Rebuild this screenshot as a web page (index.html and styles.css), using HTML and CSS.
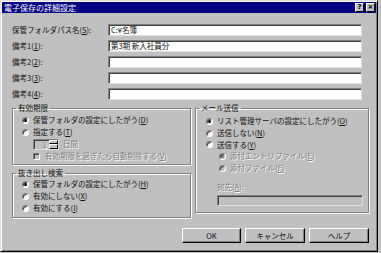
FILE: index.html
```html
<!DOCTYPE html>
<html lang="ja">
<head>
  <meta charset="UTF-8" />
  <title>電子保存の詳細設定</title>
  <link rel="stylesheet" href="styles.css">
</head>
<body>

  <div class="dialog">
    <div class="titlebar">
      <span class="title">電子保存の詳細設定</span>
      <div class="title-buttons">
        <span class="tbtn">?</span>
        <span class="tbtn">×</span>
      </div>
    </div>

    <div class="content">
      <div class="fields">
        <div class="field"><label>保管フォルダパス名(<u>S</u>):</label><div class="textbox">C:¥名簿</div></div>
        <div class="field"><label>備考1(<u>1</u>):</label><div class="textbox">第3期 新入社員分</div></div>
        <div class="field"><label>備考2(<u>2</u>):</label><div class="textbox"></div></div>
        <div class="field"><label>備考3(<u>3</u>):</label><div class="textbox"></div></div>
        <div class="field"><label>備考4(<u>4</u>):</label><div class="textbox"></div></div>
      </div>

      <div class="groups">
        <div class="col-left">
          <fieldset class="group group-expire">
            <legend>有効期限</legend>
            <div class="group-body">
              <div class="opt"><span class="radio checked"></span>保管フォルダの設定にしたがう(<u>D</u>)</div>
              <div class="opt"><span class="radio"></span>指定する(<u>T</u>)</div>
              <div class="opt opt-spin">
                <div class="spinbox">
                  <span class="spin-value">1</span>
                  <span class="spin-btns"><span class="spin-up"></span><span class="spin-down"></span></span>
                </div>
                <span class="disabled">日間</span>
              </div>
              <div class="opt opt-check disabled"><span class="checkbox"></span>有効期限を過ぎたら自動削除する(<u>V</u>)</div>
            </div>
          </fieldset>

          <fieldset class="group group-search">
            <legend>抜き出し検索</legend>
            <div class="group-body">
              <div class="opt"><span class="radio checked"></span>保管フォルダの設定にしたがう(<u>H</u>)</div>
              <div class="opt"><span class="radio"></span>有効にしない(<u>X</u>)</div>
              <div class="opt"><span class="radio"></span>有効にする(<u>I</u>)</div>
            </div>
          </fieldset>
        </div>

        <fieldset class="group group-mail">
          <legend>メール送信</legend>
          <div class="group-body">
            <div class="opt"><span class="radio checked"></span>リスト管理サーバの設定にしたがう(<u>O</u>)</div>
            <div class="opt"><span class="radio"></span>送信しない(<u>N</u>)</div>
            <div class="opt opt-short"><span class="radio"></span>送信する(<u>Y</u>)</div>
            <div class="opt opt-sub disabled"><span class="radio checked"></span>添付エントリファイル(<u>E</u>)</div>
            <div class="opt opt-sub disabled"><span class="radio"></span>添付ファイル(<u>F</u>)</div>
            <div class="opt opt-addr disabled">宛先(<u>A</u>):</div>
            <div class="textbox textbox-disabled addr"></div>
          </div>
        </fieldset>
      </div>

      <div class="buttons">
        <button class="btn btn-ok">OK</button>
        <button class="btn">キャンセル</button>
        <button class="btn">ヘルプ</button>
      </div>
    </div>
  </div>

</body>
</html>
```

FILE: styles.css
```css
* {
  margin: 0;
  padding: 0;
  box-sizing: border-box;
}

body {
  font-family: "Noto Sans CJK JP", "Liberation Sans", sans-serif;
  font-size: 7.5px;
  line-height: 12px;
  background: #c0c0c0;
  color: #111;
}

u {
  text-decoration: underline;
  text-underline-offset: 1px;
}

.dialog {
  width: 378px;
  height: 252px;
  padding: 1px;
  background: #c0c0c0;
  border: 1px solid;
  border-color: #dfdfdf #000 #000 #dfdfdf;
  box-shadow: inset 1px 1px #fff, inset -1px -1px #808080;
}

/* title bar */
.titlebar {
  display: flex;
  align-items: center;
  justify-content: space-between;
  height: 11px;
  padding: 0 1px 0 2px;
  background: #000080;
  color: #fff;
}

.title {
  font-size: 8px;
  line-height: 11px;
}

.title-buttons {
  display: flex;
  gap: 2px;
}

.tbtn {
  width: 9px;
  height: 9px;
  background: #c0c0c0;
  color: #000;
  font-family: "DejaVu Sans", sans-serif;
  font-weight: bold;
  font-size: 7px;
  line-height: 7px;
  text-align: center;
  border: 1px solid;
  border-color: #fff #000 #000 #fff;
}

/* content */
.content {
  padding: 11px 7px 0 10px;
}

.fields {
  display: flex;
  flex-direction: column;
  gap: 4px;
}

.field {
  display: flex;
  align-items: center;
  height: 12px;
}

.field label {
  width: 96px;
}

.textbox {
  width: 254px;
  height: 12px;
  padding-left: 2px;
  background: #fff;
  line-height: 10px;
  border: 1px solid;
  border-color: #808080 #dfdfdf #dfdfdf #808080;
  box-shadow: inset 1px 1px #404040;
}

.textbox-disabled {
  background: #c0c0c0;
}

/* groups */
.groups {
  display: flex;
  gap: 4px;
  margin-top: 3px;
}

.col-left {
  display: flex;
  flex-direction: column;
  gap: 3px;
  width: 179px;
}

.group {
  padding: 0;
  border: 1px solid #808080;
  box-shadow: inset 1px 1px #fff, 1px 1px #fff;
  min-width: 0;
}

.group legend {
  margin-left: 3px;
  padding: 0 2px;
  line-height: 10px;
}

.group-expire {
  height: 62px;
}

.group-expire .group-body {
  padding: 1px 0 0 9px;
}

.group-search {
  height: 50px;
}

.group-search .group-body {
  padding-left: 9px;
}

.group-mail {
  width: 174px;
  height: 110px;
}

.group-mail .group-body {
  padding: 2px 0 0 10px;
}

.opt {
  display: flex;
  align-items: center;
  height: 12px;
  white-space: nowrap;
}

.opt-short {
  height: 11px;
}

.opt-sub {
  padding-left: 13px;
}

.opt-addr {
  padding-left: 11px;
  margin-top: 7px;
  height: 11px;
}

.addr {
  width: 146px;
  height: 11px;
  margin: 3px 0 0 11px;
}

.disabled {
  color: #808080;
  text-shadow: 1px 1px #fff;
}

/* radio and check */
.radio {
  flex: none;
  width: 7px;
  height: 7px;
  margin-right: 4px;
  border-radius: 50%;
  background: #fff;
  border: 1px solid;
  border-color: #808080 #fff #fff #808080;
  box-shadow: inset 1px 1px #404040;
}

.radio.checked {
  background: radial-gradient(circle, #000 1.2px, #fff 1.8px);
}

.disabled .radio {
  background: #c0c0c0;
}

.disabled .radio.checked {
  background: radial-gradient(circle, #808080 1.2px, #c0c0c0 1.8px);
}

.checkbox {
  flex: none;
  width: 7px;
  height: 7px;
  margin-right: 5px;
  background: #c0c0c0;
  border: 1px solid;
  border-color: #808080 #fff #fff #808080;
  box-shadow: inset 1px 1px #404040;
}

.opt-check {
  padding-left: 11px;
}

/* spin box */
.opt-spin {
  padding-left: 11px;
  gap: 4px;
}

.spinbox {
  display: flex;
  width: 26px;
  height: 11px;
  border: 1px solid;
  border-color: #808080 #dfdfdf #dfdfdf #808080;
  box-shadow: inset 1px 1px #404040;
}

.spin-value {
  flex: 1;
  text-align: right;
  padding-right: 2px;
  line-height: 9px;
  color: #808080;
  text-shadow: 1px 1px #fff;
}

.spin-btns {
  display: flex;
  flex-direction: column;
  width: 9px;
}

.spin-up,
.spin-down {
  flex: 1;
  background: #c0c0c0;
  border: 1px solid;
  border-color: #fff #000 #000 #fff;
}

/* buttons */
.buttons {
  display: flex;
  justify-content: flex-end;
  gap: 4px;
  margin-top: 10px;
}

.btn {
  width: 60px;
  height: 15px;
  font-family: inherit;
  font-size: 7.5px;
  line-height: 12px;
  color: #111;
  background: #c0c0c0;
  border: 1px solid;
  border-color: #fff #000 #000 #fff;
  box-shadow: inset -1px -1px #808080;
}

.btn-ok {
  width: 59px;
}
```
